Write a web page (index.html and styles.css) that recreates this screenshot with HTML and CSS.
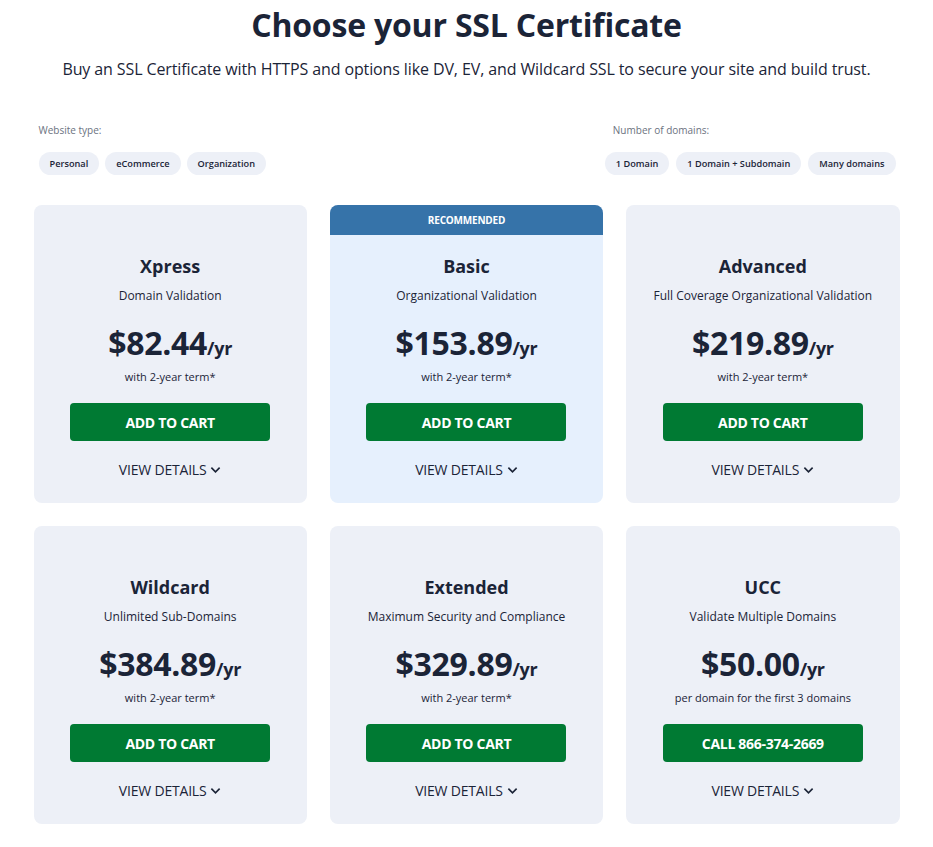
FILE: index.html
```html
<!DOCTYPE html>
<html lang="en">
<head>
<meta charset="utf-8">
<title>Choose your SSL Certificate</title>
<link rel="stylesheet" href="styles.css">
</head>
<body>
<main class="page">
  <header class="hero">
    <h1 class="hero-title">Choose your SSL Certificate</h1>
    <p class="hero-sub">Buy an SSL Certificate with HTTPS and options like DV, EV, and Wildcard SSL to secure your site and build trust.</p>
  </header>

  <section class="filters">
    <div class="filter-group">
      <div class="filter-label">Website type:</div>
      <div class="pills">
        <span class="pill">Personal</span>
        <span class="pill">eCommerce</span>
        <span class="pill">Organization</span>
      </div>
    </div>
    <div class="filter-group filter-right">
      <div class="filter-label label-indent">Number of domains:</div>
      <div class="pills">
        <span class="pill">1 Domain</span>
        <span class="pill">1 Domain + Subdomain</span>
        <span class="pill">Many domains</span>
      </div>
    </div>
  </section>

  <section class="grid">
    <article class="card">
      <h2 class="card-title">Xpress</h2>
      <p class="card-sub">Domain Validation</p>
      <div class="price">$82.44<span class="per">/yr</span></div>
      <p class="term">with 2-year term*</p>
      <button class="btn">ADD TO CART</button>
      <a class="details">VIEW DETAILS <svg class="chev" viewBox="0 0 12 8"><path d="M1.5 1.5 6 6l4.5-4.5"/></svg></a>
    </article>

    <article class="card card-rec">
      <div class="rec-badge">RECOMMENDED</div>
      <h2 class="card-title">Basic</h2>
      <p class="card-sub">Organizational Validation</p>
      <div class="price">$153.89<span class="per">/yr</span></div>
      <p class="term">with 2-year term*</p>
      <button class="btn">ADD TO CART</button>
      <a class="details">VIEW DETAILS <svg class="chev" viewBox="0 0 12 8"><path d="M1.5 1.5 6 6l4.5-4.5"/></svg></a>
    </article>

    <article class="card">
      <h2 class="card-title">Advanced</h2>
      <p class="card-sub">Full Coverage Organizational Validation</p>
      <div class="price">$219.89<span class="per">/yr</span></div>
      <p class="term">with 2-year term*</p>
      <button class="btn">ADD TO CART</button>
      <a class="details">VIEW DETAILS <svg class="chev" viewBox="0 0 12 8"><path d="M1.5 1.5 6 6l4.5-4.5"/></svg></a>
    </article>

    <article class="card">
      <h2 class="card-title">Wildcard</h2>
      <p class="card-sub">Unlimited Sub-Domains</p>
      <div class="price">$384.89<span class="per">/yr</span></div>
      <p class="term">with 2-year term*</p>
      <button class="btn">ADD TO CART</button>
      <a class="details">VIEW DETAILS <svg class="chev" viewBox="0 0 12 8"><path d="M1.5 1.5 6 6l4.5-4.5"/></svg></a>
    </article>

    <article class="card">
      <h2 class="card-title">Extended</h2>
      <p class="card-sub">Maximum Security and Compliance</p>
      <div class="price">$329.89<span class="per">/yr</span></div>
      <p class="term">with 2-year term*</p>
      <button class="btn">ADD TO CART</button>
      <a class="details">VIEW DETAILS <svg class="chev" viewBox="0 0 12 8"><path d="M1.5 1.5 6 6l4.5-4.5"/></svg></a>
    </article>

    <article class="card">
      <h2 class="card-title">UCC</h2>
      <p class="card-sub">Validate Multiple Domains</p>
      <div class="price">$50.00<span class="per">/yr</span></div>
      <p class="term">per domain for the first 3 domains</p>
      <button class="btn">CALL 866-374-2669</button>
      <a class="details">VIEW DETAILS <svg class="chev" viewBox="0 0 12 8"><path d="M1.5 1.5 6 6l4.5-4.5"/></svg></a>
    </article>
  </section>
</main>
</body>
</html>
```

FILE: styles.css
```css
* { box-sizing: border-box; }

body {
  margin: 0;
  background: #ffffff;
  font-family: "Open Sans", "Noto Sans", sans-serif;
  color: #1b2437;
}

.page {
  width: 866px;
  margin: 0 auto;
  padding-top: 4px;
}

.hero {
  text-align: center;
}

.hero-title {
  margin: 0;
  font-size: 32px;
  line-height: 42px;
  font-weight: 700;
  color: #1b2437;
  letter-spacing: -0.2px;
}

.hero-sub {
  margin: 12px 0 0;
  font-size: 16px;
  line-height: 22px;
  color: #1b2437;
  letter-spacing: -0.11px;
}

.filters {
  display: flex;
  justify-content: space-between;
  margin-top: 43px;
  padding: 0 4px 0 5px;
}

.filter-label {
  font-size: 10px;
  line-height: 14px;
  color: #6b7280;
}

.label-indent {
  padding-left: 8px;
}

.pills {
  display: flex;
  gap: 6px;
  margin-top: 15px;
}

.filter-right .pills {
  gap: 7px;
}

.pill {
  display: inline-flex;
  align-items: center;
  height: 23px;
  padding: 0 11px;
  border-radius: 12px;
  background: #edf0f7;
  font-size: 9.2px;
  font-weight: 600;
  color: #1b2437;
}

.grid {
  display: grid;
  grid-template-columns: repeat(3, 1fr);
  column-gap: 23px;
  row-gap: 23px;
  margin-top: 30px;
}

.card {
  position: relative;
  height: 298px;
  background: #edf0f7;
  border-radius: 8px;
  padding-top: 49px;
  display: flex;
  flex-direction: column;
  align-items: center;
  text-align: center;
}

.card-rec {
  background: #e6f0fd;
}

.rec-badge {
  position: absolute;
  top: 0;
  left: 0;
  right: 0;
  height: 30px;
  border-radius: 8px 8px 0 0;
  background: #3673a9;
  color: #ffffff;
  font-size: 10px;
  font-weight: 700;
  line-height: 30px;
  letter-spacing: -0.2px;
}

.card-title {
  margin: 0;
  font-size: 18px;
  line-height: 24px;
  font-weight: 700;
}

.card-sub {
  margin: 10px 0 0;
  font-size: 12px;
  line-height: 16px;
}

.price {
  margin-top: 18px;
  font-size: 32px;
  line-height: 42px;
  font-weight: 700;
  letter-spacing: -0.3px;
}

.per {
  font-size: 18px;
}

.term {
  margin: 0;
  font-size: 11px;
  line-height: 15px;
}

.btn {
  margin-top: 19px;
  width: 200px;
  height: 38px;
  border: 0;
  border-radius: 4px;
  background: #007a33;
  color: #ffffff;
  font-family: inherit;
  font-size: 14px;
  font-weight: 700;
  letter-spacing: -0.3px;
}

.details {
  margin-top: 19px;
  display: inline-flex;
  align-items: center;
  gap: 4px;
  font-size: 14px;
  line-height: 20px;
  color: #1b2437;
  letter-spacing: -0.2px;
}

.chev {
  width: 11px;
  height: 8px;
  fill: none;
  stroke: #1b2437;
  stroke-width: 1.8;
}
```
